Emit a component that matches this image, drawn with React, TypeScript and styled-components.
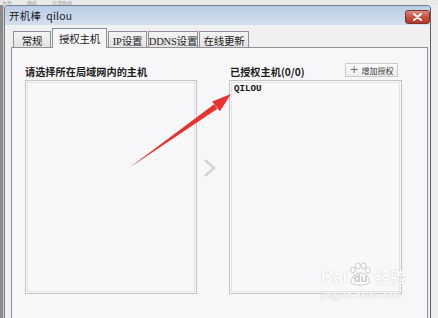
import styled, { createGlobalStyle } from "styled-components";

const GlobalStyle = createGlobalStyle`
  html, body {
    margin: 0;
    padding: 0;
    background: #ececec;
  }
  * {
    box-sizing: border-box;
  }
`;

const CJK = `"Noto Sans CJK SC", "Noto Sans", sans-serif`;

const Page = styled.div`
  position: relative;
  width: 438px;
  height: 318px;
  overflow: hidden;
  display: flex;
  flex-direction: column;
  background: #ececec;
  font-family: ${CJK};
`;

const TopStrip = styled.div`
  height: 5px;
  overflow: hidden;
  background: #e9e9e9;
  padding-left: 2px;
  font-size: 5px;
  line-height: 5px;
  color: #a4a4a4;
  word-spacing: 14px;
  white-space: nowrap;
`;

const Desk = styled.div`
  flex: 1;
  display: flex;
  min-height: 0;
`;

const LeftEdge = styled.div`
  width: 4px;
  background: linear-gradient(90deg, #8a8a8a 0 3px, #c9cdd2 3px);
`;

const Window = styled.div`
  width: 427px;
  display: flex;
  flex-direction: column;
  border: 1px solid #707d8c;
  border-right-color: #5a5f66;
  border-bottom: none;
  border-radius: 4px 4px 0 0;
  background: #f0f0f0;
`;

const TitleBar = styled.div`
  height: 19px;
  display: flex;
  align-items: center;
  justify-content: space-between;
  padding: 0 0 0 4px;
  background: linear-gradient(#b8cce4, #c8d8eb 60%, #d3dfee);
  border-radius: 3px 3px 0 0;
`;

const Title = styled.span`
  font-size: 10.5px;
  color: #1b1b1b;
  letter-spacing: 0.2px;
`;

const CloseButton = styled.div`
  width: 25px;
  height: 14px;
  margin-top: 2px;
  border: 1px solid #7d3431;
  border-radius: 3px;
  background: linear-gradient(#dd8a80, #c7503f 50%, #b5382a);
  display: flex;
  align-items: center;
  justify-content: center;
`;

const Client = styled.div`
  flex: 1;
  display: flex;
  flex-direction: column;
  padding: 3px 2px 0 6px;
  background: #f0f0f0;
`;

const TabRow = styled.div`
  height: 20px;
  display: flex;
  align-items: flex-end;
  gap: 1px;
  padding-left: 2px;
  position: relative;
  z-index: 1;
`;

const Tab = styled.div<{ $w: number; $active?: boolean }>`
  width: ${(p) => p.$w}px;
  height: ${(p) => (p.$active ? 20 : 16)}px;
  margin-bottom: ${(p) => (p.$active ? 0 : 1)}px;
  border: 1px solid #8d9095;
  border-bottom: none;
  background: ${(p) =>
    p.$active ? "#f7f6f9" : "linear-gradient(#f4f4f4, #e2e2e2)"};
  display: flex;
  align-items: center;
  justify-content: center;
  white-space: nowrap;
  font-size: 10.5px;
  letter-spacing: -0.2px;
  color: #1c1c1c;
  font-family: "Liberation Serif", ${CJK};
  padding-top: ${(p) => (p.$active ? 0 : 1)}px;
`;

const Panel = styled.div`
  position: relative;
  z-index: 0;
  flex: 1;
  margin-top: -1px;
  border: 1px solid #8d9095;
  border-bottom: none;
  background: #f7f6f9;
  padding: 14px 0 0 13px;
  display: grid;
  grid-template-columns: 172px 32px 173px;
  align-content: start;
`;

const Column = styled.div`
  display: flex;
  flex-direction: column;
`;

const Header = styled.div`
  height: 18px;
  display: flex;
  align-items: flex-end;
  justify-content: space-between;
`;

const Label = styled.div<{ $indent?: number }>`
  font-size: 10.2px;
  line-height: 12px;
  font-weight: 700;
  color: #1d1d1d;
  margin: 0 0 2px ${(p) => p.$indent ?? 0}px;
  white-space: nowrap;
`;

const AddButton = styled.div`
  width: 53px;
  height: 14px;
  margin: 0 4px 3px 0;
  border: 1px solid #cbcbcb;
  background: linear-gradient(#fdfdfd, #ededed);
  display: flex;
  align-items: center;
  justify-content: center;
  gap: 3px;
  font-size: 8px;
  color: #3a3a3a;

  b {
    font-weight: 400;
    font-size: 11px;
    line-height: 10px;
    color: #6a6a6a;
    font-family: "DejaVu Sans", sans-serif;
  }
`;

const ListBox = styled.div`
  height: 214px;
  border: 1px solid #c3c3c3;
  box-shadow: inset 0 0 0 1px #f9f8fb, inset 0 0 0 2px #e3e3e6;
  background: #f8f7fa;
  padding: 3px 4px;
`;

const HostItem = styled.div`
  font-family: "Liberation Mono", monospace;
  font-size: 9.2px;
  font-weight: 700;
  line-height: 10px;
  color: #111;
`;

const Middle = styled.div`
  padding: 96px 0 0 6px;
`;

const Watermark = styled.div`
  position: absolute;
  left: 309px;
  top: 214px;
  display: flex;
  flex-direction: column;
  align-items: flex-start;
  color: #ffffff;
  text-shadow: 0 0 1px rgba(120, 120, 120, 0.5);
  pointer-events: none;
`;

const WatermarkBrand = styled.div`
  display: flex;
  align-items: flex-end;
  font-family: "Liberation Sans", Arial, sans-serif;
  font-weight: 700;
  font-size: 17px;
  line-height: 18px;
`;

const WatermarkCn = styled.span`
  font-family: ${CJK};
  font-size: 15px;
  margin-left: 2px;
`;

const PawMark = styled.span`
  position: relative;
  width: 24px;
  height: 24px;
  margin: 0 1px;
  display: flex;
  align-items: flex-end;
  justify-content: center;
  font-size: 11px;
  line-height: 13px;
  font-weight: 700;
  color: #ffffff;
  text-shadow: none;

  svg {
    position: absolute;
    left: 0;
    top: 0;
  }

  em {
    position: relative;
    font-style: normal;
    color: rgba(150, 150, 150, 0.55);
    padding-bottom: 1px;
  }
`;

const WatermarkUrl = styled.div`
  font-family: "Liberation Sans", Arial, sans-serif;
  font-size: 9.5px;
  margin-top: 3px;
  letter-spacing: 0.2px;
`;

const Overlay = styled.svg`
  position: absolute;
  left: 0;
  top: 0;
  pointer-events: none;
`;

const RightMargin = styled.div`
  flex: 1;
  background: #ededed;
`;

function CloseIcon() {
  return (
    <svg width="9" height="8" viewBox="0 0 9 8">
      <path
        d="M1 1 L8 7 M8 1 L1 7"
        stroke="#ffffff"
        strokeWidth="2"
        strokeLinecap="round"
      />
    </svg>
  );
}

function Paw() {
  return (
    <PawMark>
      <svg width="24" height="24" viewBox="0 0 24 24">
        <g fill="#ffffff" stroke="rgba(130,130,130,0.5)" strokeWidth="0.8">
          <ellipse cx="5" cy="8" rx="2.3" ry="2.9" />
          <ellipse cx="10" cy="4" rx="2.3" ry="3" />
          <ellipse cx="15.5" cy="4" rx="2.3" ry="3" />
          <ellipse cx="20" cy="8.5" rx="2.2" ry="2.8" />
          <path d="M3 21 C2 16 8 11 12.5 11 C17 11 22.5 16 21 21 C18 23.5 6 23.5 3 21 Z" />
        </g>
      </svg>
      <em>du</em>
    </PawMark>
  );
}

const tabs = [
  { label: "常规", w: 38 },
  { label: "授权主机", w: 55, active: true },
  { label: "IP设置", w: 39 },
  { label: "DDNS设置", w: 50 },
  { label: "在线更新", w: 50 },
];

export default function App() {
  return (
    <>
      <GlobalStyle />
      <Page>
        <TopStrip>文件 模板 应用数据</TopStrip>
        <Desk>
          <LeftEdge />
          <Window>
            <TitleBar>
              <Title>开机棒&nbsp; qilou</Title>
              <CloseButton>
                <CloseIcon />
              </CloseButton>
            </TitleBar>
            <Client>
              <TabRow>
                {tabs.map((t) => (
                  <Tab key={t.label} $w={t.w} $active={t.active}>
                    {t.label}
                  </Tab>
                ))}
              </TabRow>
              <Panel>
                <Column>
                  <Header>
                    <Label>请选择所在局域网内的主机</Label>
                  </Header>
                  <ListBox />
                </Column>
                <Middle>
                  <svg width="14" height="20" viewBox="0 0 14 20">
                    <path
                      d="M2 2 L11 10 L2 18"
                      fill="none"
                      stroke="#d2d2d4"
                      strokeWidth="2.4"
                    />
                  </svg>
                </Middle>
                <Column>
                  <Header>
                    <Label $indent={1}>已授权主机(0/0)</Label>
                    <AddButton>
                      <b>+</b>增加授权
                    </AddButton>
                  </Header>
                  <ListBox>
                    <HostItem>QILOU</HostItem>
                  </ListBox>
                </Column>
                <Watermark>
                  <WatermarkBrand>
                    Bai
                    <Paw />
                    <WatermarkCn>经验</WatermarkCn>
                  </WatermarkBrand>
                  <WatermarkUrl>jingyan.baidu.com</WatermarkUrl>
                </Watermark>
              </Panel>
            </Client>
          </Window>
          <RightMargin />
        </Desk>
        <Overlay width="438" height="318" viewBox="0 0 438 318">
          <polygon
            fill="#e8322e"
            points="129,168 217.4,108.8 212.2,101.6 231,94 219.9,111.3 214.4,104.0"
          />
        </Overlay>
      </Page>
    </>
  );
}
